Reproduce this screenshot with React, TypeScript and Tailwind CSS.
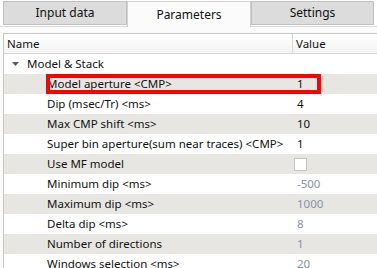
import React from 'react';

type Row = { label: string; value?: string; disabled?: boolean; check?: boolean; marked?: boolean };

const ROWS: Row[] = [
  { label: 'Model aperture <CMP>', value: '1', marked: true },
  { label: 'Dip (msec/Tr) <ms>', value: '4' },
  { label: 'Max CMP shift <ms>', value: '10' },
  { label: 'Super bin aperture(sum near traces) <CMP>', value: '1' },
  { label: 'Use MF model', check: true },
  { label: 'Minimum dip <ms>', value: '-500', disabled: true },
  { label: 'Maximum dip <ms>', value: '1000', disabled: true },
  { label: 'Delta dip <ms>', value: '8', disabled: true },
  { label: 'Number of directions', value: '1', disabled: true },
  { label: 'Windows selection <ms>', value: '20', disabled: true },
];

const App: React.FC = () => {
  return (
    <div className="w-[377px] h-[268px] overflow-hidden bg-white text-[11.5px] text-[#111] font-['Noto_Sans',sans-serif] leading-none">
      {/* Tabs */}
      <div className="relative h-[26px] flex items-end pl-[3px] text-[12px]">
        <div className="w-[124px] h-[24px] mb-[1px] flex items-center justify-center bg-[#dcdcdc] border border-[#c0c0c0]">
          Input data
        </div>
        <div className="relative z-10 w-[124px] h-[26px] -mb-[1px] flex items-center justify-center bg-[#fbfbfb] border border-b-0 border-[#d0d0d0]">
          Parameters
        </div>
        <div className="w-[123px] h-[24px] mb-[1px] flex items-center justify-center bg-[#dcdcdc] border border-[#c0c0c0]">
          Settings
        </div>
      </div>

      {/* Pane */}
      <div className="border-t border-[#d9d9d9] bg-[#fbfbfb] pt-[6px] pl-[3px]">
        <div className="border-l border-t border-[#c6c6c6] bg-white">
          {/* Header */}
          <div className="flex h-[20px] border-b border-[#d8d8d8] bg-gradient-to-b from-white to-[#f3f3f3]">
            <div className="w-[289px] flex items-center pl-[3px] border-r border-[#d8d8d8]">Name</div>
            <div className="flex-1 flex items-center pl-[3px]">Value</div>
          </div>

          {/* Group */}
          <div className="flex h-[20px] items-center">
            <svg width="7" height="4" viewBox="0 0 7 4" className="ml-[8px] mr-[8px]">
              <path d="M0 0H7L3.5 4Z" fill="#5a5a5a" />
            </svg>
            <span>Model &amp; Stack</span>
          </div>

          {ROWS.map((r, i) => (
            <div
              key={r.label}
              className={`relative flex h-[20px] items-center ${i % 2 === 0 ? 'bg-[#e8e6e3]' : 'bg-white'}`}
            >
              <div className="w-[289px] pl-[43px] whitespace-nowrap">{r.label}</div>
              <div className={`flex-1 pl-[4px] ${r.disabled ? 'text-[#8592a6]' : ''}`}>
                {r.check ? (
                  <div className="w-[13px] h-[13px] -ml-[3px] bg-white border border-[#c4c4c4]" />
                ) : (
                  r.value
                )}
              </div>
              {r.marked && (
                <div className="absolute left-[42px] top-0 w-[275px] h-[20px] border-4 border-[#ff0000] pointer-events-none" />
              )}
            </div>
          ))}
        </div>
      </div>
    </div>
  );
};

export default App;
